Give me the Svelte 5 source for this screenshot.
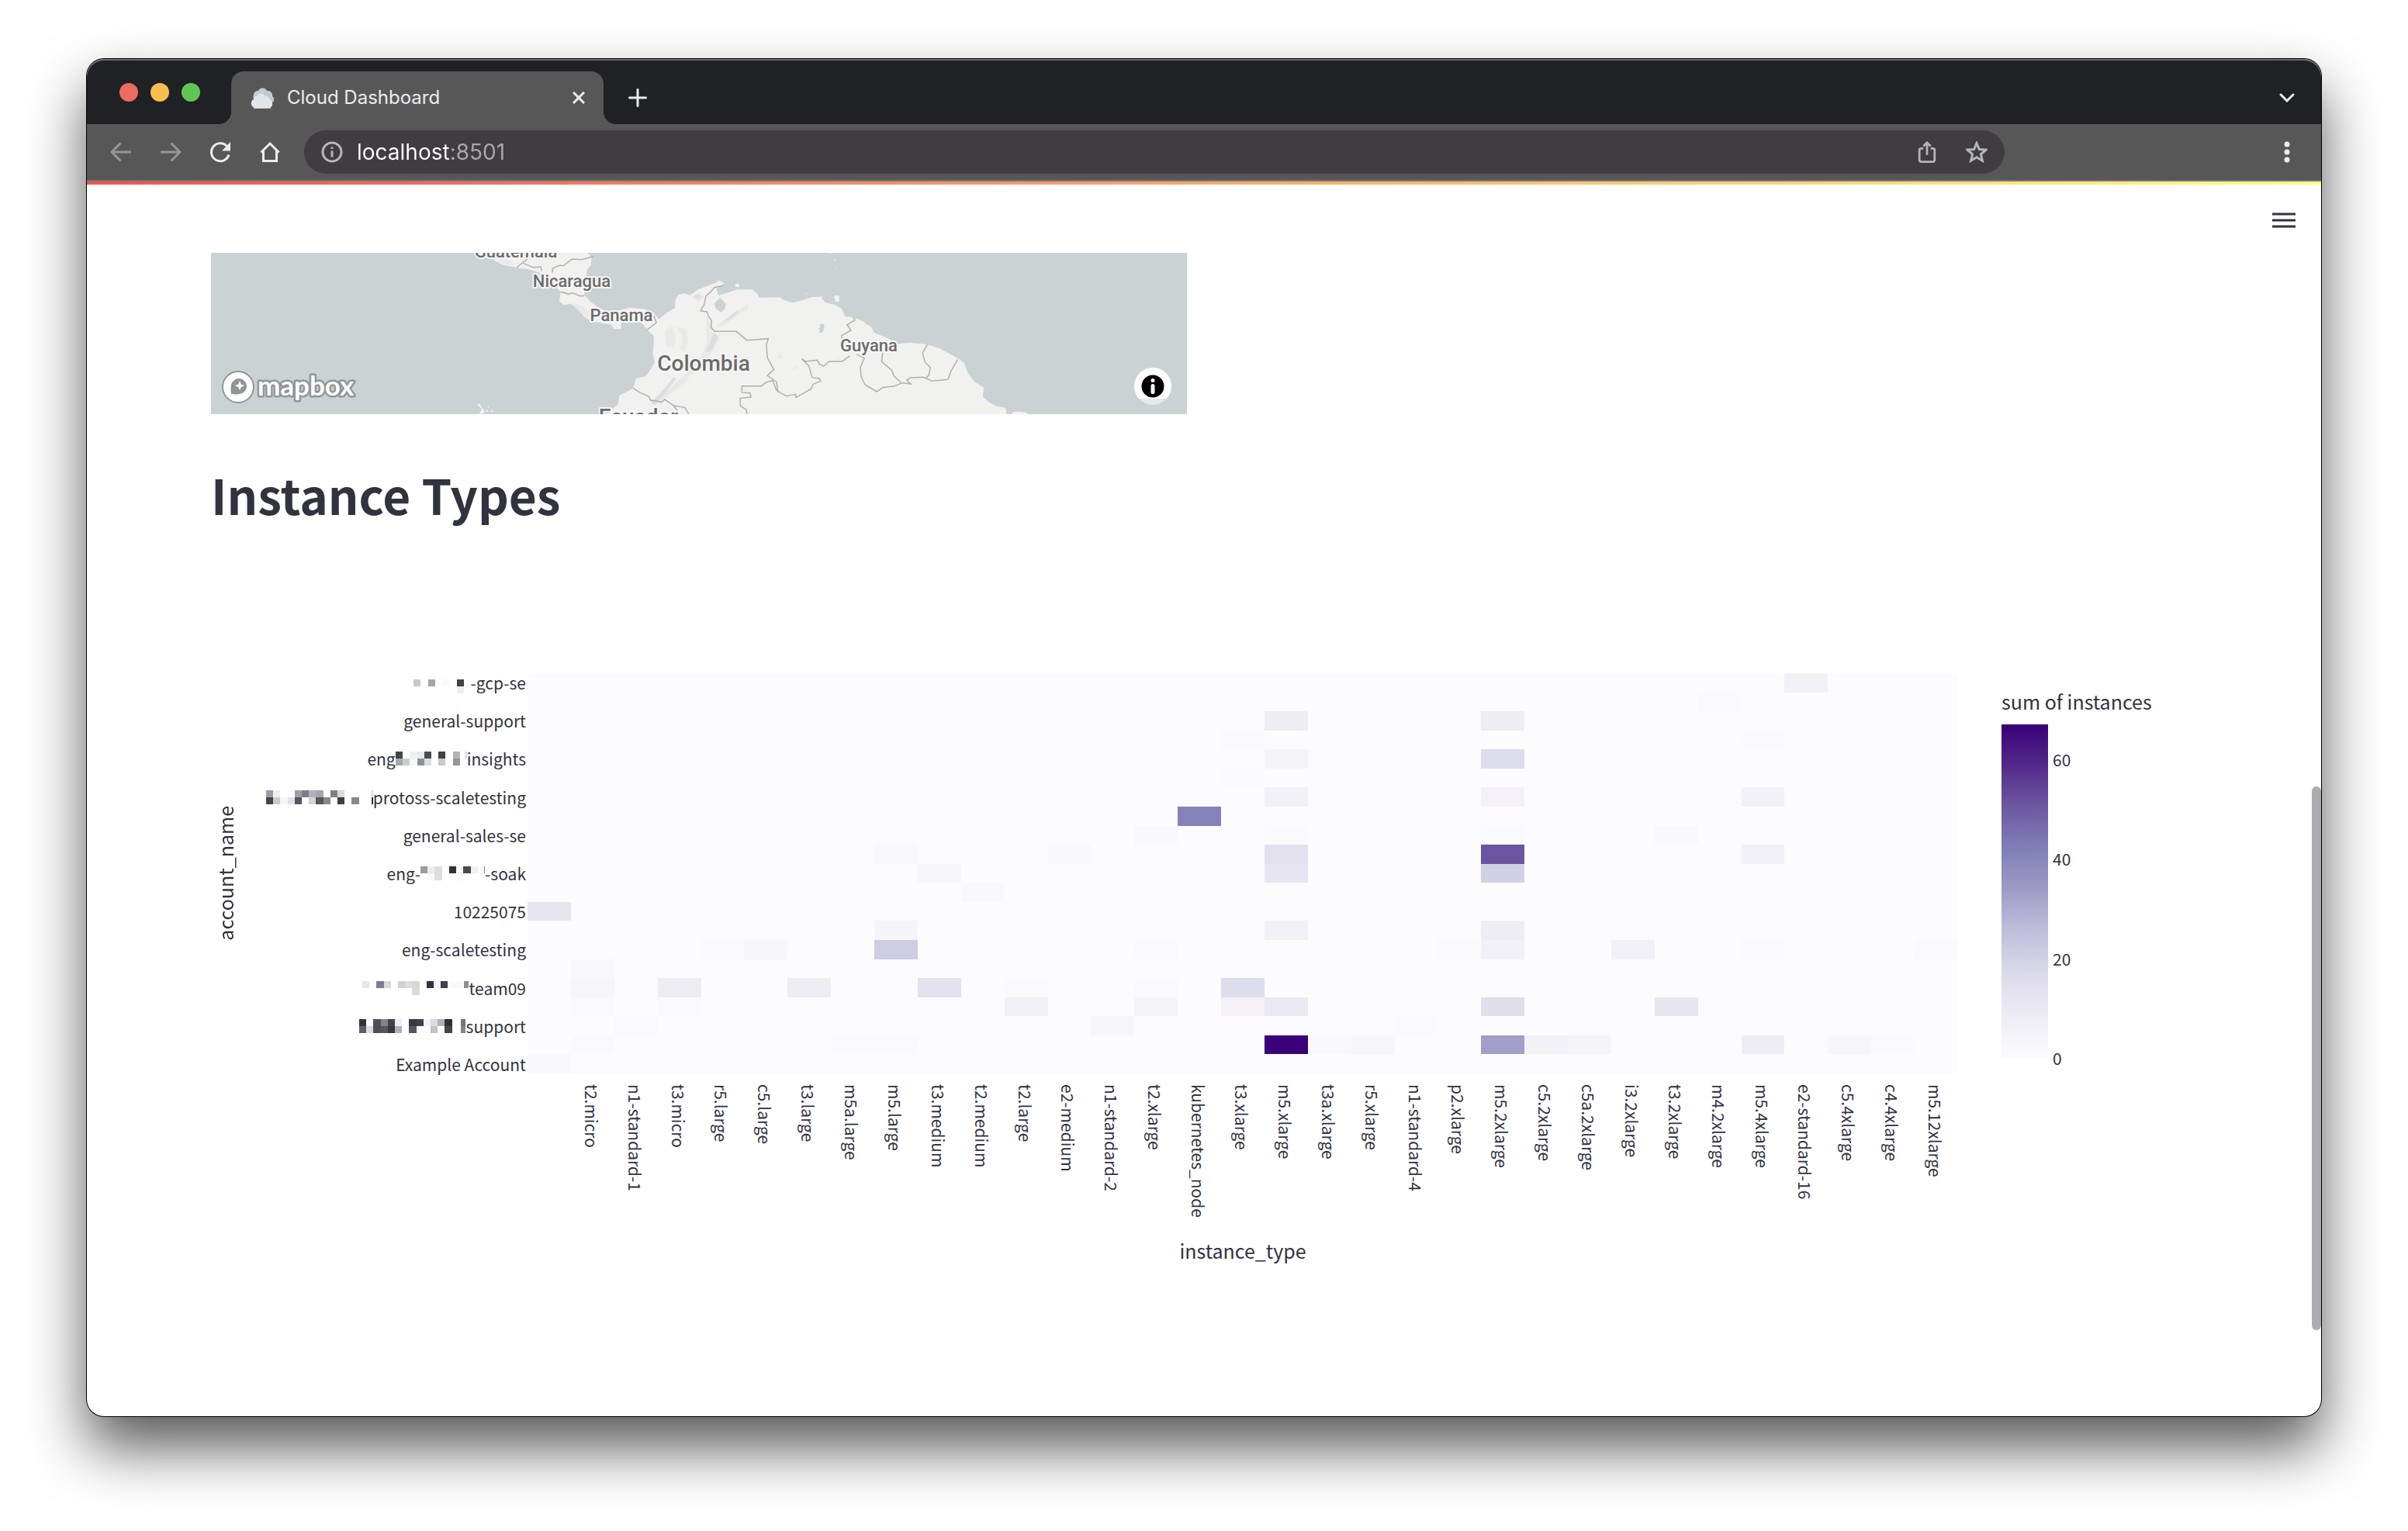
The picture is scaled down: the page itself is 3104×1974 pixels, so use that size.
<script>
  const instanceTypes = [
    '', 't2.micro', 'n1-standard-1', 't3.micro', 'r5.large', 'c5.large', 't3.large', 'm5a.large',
    'm5.large', 't3.medium', 't2.medium', 't2.large', 'e2-medium', 'n1-standard-2', 't2.xlarge',
    'kubernetes_node', 't3.xlarge', 'm5.xlarge', 't3a.xlarge', 'r5.xlarge', 'n1-standard-4',
    'p2.xlarge', 'm5.2xlarge', 'c5.2xlarge', 'c5a.2xlarge', 'i3.2xlarge', 't3.2xlarge',
    'm4.2xlarge', 'm5.4xlarge', 'e2-standard-16', 'c5.4xlarge', 'c4.4xlarge', 'm5.12xlarge'
  ];

  // Every second row carries a label; redacted parts are a mosaic of [column, row, colour, columns wide].
  const accounts = [
    { end: '-gcp-se', cols: 8, rows: 3, cells: [[0, 1, '#cac8ce'], [2, 1, '#a6a5ab'], [4, 1, '#f9f9f9'], [6, 1, '#42434e'], [6, 2, '#eeeeee']] },
    { end: 'general-support' },
    { start: 'eng', end: 'insights', cols: 10, rows: 2, cells: [[0, 0, '#42434e'], [2, 0, '#eef0f1'], [3, 0, '#e8e9ea'], [4, 0, '#4a4b56'], [6, 0, '#3f404b'], [8, 0, '#b4b4b8'], [0, 1, '#a7a6ac'], [1, 1, '#cacccd'], [2, 1, '#f6f7f7'], [3, 1, '#8f9096'], [4, 1, '#dbdcde'], [6, 1, '#c9cacb'], [8, 1, '#95969c'], [9.8, 0, '#d4d4d6', 0.2]] },
    { end: 'protoss-scaletesting', cols: 15, rows: 2, cells: [[0, 0, '#9b9ba1'], [1, 0, '#eef0f0'], [3, 0, '#fcfcfc'], [4, 0, '#a09fa6'], [5, 0, '#7b7e88'], [6, 0, '#b2b1b7'], [7, 0, '#a5a5ac'], [9, 0, '#807f88'], [10, 0, '#dbdbde'], [0, 1, '#42434e'], [1, 1, '#c9cacf'], [2, 1, '#f6f6f6'], [3, 1, '#e2e2e3'], [4, 1, '#555661'], [6, 1, '#d4d5d5'], [7, 1, '#555661'], [8, 1, '#88888f'], [10, 1, '#3c3d49'], [12, 1, '#88898f'], [14.8, 0, '#d9d9db', 0.2], [14.8, 1, '#31323e', 0.2]] },
    { end: 'general-sales-se' },
    { start: 'eng-', end: '-soak', cols: 9, rows: 2, cells: [[0, 0, '#9d9ca2'], [1, 0, '#ececec'], [2, 0, '#dddddf'], [4, 0, '#31323e'], [5, 0, '#fbfbfb'], [6, 0, '#484a53'], [7, 0, '#eff1f2'], [8, 0, '#fbfbfb'], [1, 1, '#f8f8f8'], [2, 1, '#dddfe0'], [5, 1, '#f9f9f9'], [8.9, 0, '#85868a', 0.1]] },
    { end: '10225075' },
    { end: 'eng-scaletesting' },
    { end: 'team09', cols: 15, rows: 2, cells: [[0, 0, '#e5e6e8'], [2, 0, '#7c7f89'], [3, 0, '#d7d8d8'], [5, 0, '#d2d2d3'], [6, 0, '#dcdcde'], [7, 0, '#d6d7d8'], [9, 0, '#31323e'], [10, 0, '#f5f5f7'], [11, 0, '#42424c'], [12, 0, '#f8f8f8'], [13, 0, '#f8f8f8'], [14.2, 0, '#8d8d92', 0.7], [7, 1, '#d9dadb']] },
    { end: 'support', cols: 15, rows: 2, cells: [[0, 0, '#31323e'], [2, 0, '#4d4e59'], [3, 0, '#828389'], [4, 0, '#40414c'], [5, 0, '#eeeeee'], [7, 0, '#373845'], [8, 0, '#40414c'], [9, 0, '#f4f6f6'], [10, 0, '#d9dbdd'], [11, 0, '#b1b1b5'], [12, 0, '#2d2e3b'], [14.2, 0, '#74747b', 0.7], [0, 1, '#5c5e68'], [1, 1, '#dcdce0'], [2, 1, '#4d4e59'], [3, 1, '#555661'], [4, 1, '#363743'], [5, 1, '#b2b1b7'], [7, 1, '#55565f'], [8, 1, '#fbfbfb'], [9, 1, '#fbfbfb'], [10, 1, '#c3c4c9'], [12, 1, '#44454f'], [14.2, 1, '#85868a', 0.7]] },
    { end: 'Example Account' }
  ];

  // One list per heatmap row: [column, instances]
  const counts = [
    [[29, 6]],
    [[27, 1]],
    [[17, 8], [22, 8]],
    [[16, 1], [28, 1]],
    [[17, 4], [22, 16]],
    [[16, 1]],
    [[17, 6], [22, 5], [28, 6]],
    [[15, 41]],
    [[14, 2], [17, 1], [22, 1], [26, 2]],
    [[8, 2], [12, 2], [17, 14], [22, 51], [28, 6]],
    [[9, 3], [17, 12], [22, 20]],
    [[10, 2]],
    [[0, 12]],
    [[8, 4], [17, 6], [22, 8]],
    [[4, 1], [5, 3], [8, 21], [14, 1], [21, 1], [22, 6], [25, 6], [28, 1], [32, 1]],
    [[1, 2]],
    [[1, 3], [3, 8], [6, 8], [9, 14], [11, 1], [14, 1], [16, 16]],
    [[1, 1], [3, 1], [11, 6], [14, 4], [16, 5], [17, 10], [22, 15], [26, 12]],
    [[2, 1], [13, 3], [20, 1]],
    [[1, 1], [7, 1], [8, 1], [17, 67], [18, 2], [19, 3], [22, 33], [23, 6], [24, 4], [28, 8], [30, 3], [31, 1]],
    [[0, 2]]
  ];

  const ramp = [[252, 252, 254], [238, 236, 244], [220, 219, 234], [192, 192, 221], [160, 156, 199], [130, 127, 183], [108, 90, 162], [83, 42, 139], [58, 0, 119]];
  const max = 67;
  function shade(n) {
    const t = (n / max) * (ramp.length - 1);
    const i = Math.min(Math.floor(t), ramp.length - 2);
    return `rgb(${ramp[i].map((c, k) => Math.round(c + (ramp[i + 1][k] - c) * (t - i))).join(' ')})`;
  }
  const cells = counts.flatMap((row, r) => row.map(([c, n]) => ({ r, c, n })));
  const ticks = [60, 40, 20, 0];
</script>

<div class="stage">
  <div class="window">
    <header class="tabs">
      <div class="lights"><button class="red" aria-label="Close window"></button><button class="amber" aria-label="Minimise window"></button><button class="green" aria-label="Zoom window"></button></div>
      <div class="tab">
        <svg class="favicon" viewBox="0 0 32 28" aria-hidden="true">
          <path fill="#c3cad3" d="M10 20a7 7 0 0 1-5-10 6 6 0 0 1 6-5 6 6 0 0 1 11 0 6 6 0 0 1 7 7 5 5 0 0 1-2 9z" />
          <path fill="#e1e6eb" d="M6 27a6 6 0 0 1-1-11 4 4 0 0 1 4-4 6 6 0 0 1 11 0 4 4 0 0 1 5 4 6 6 0 0 1 1 11z" />
          <path stroke="#c9d0d7" stroke-width="1" d="M5 27.500h22" />
        </svg>
        <span class="title">Cloud Dashboard</span>
        <button class="icon" aria-label="Close tab"><svg width="16" height="16" viewBox="0 0 16 16"><path d="M1 1l14 14M15 1L1 15" /></svg></button>
      </div>
      <button class="icon plus" aria-label="New tab"><svg width="24" height="24" viewBox="0 0 24 24"><path d="M12 1.500v21M1.500 12h21" /></svg></button>
      <button class="icon chevron" aria-label="Search tabs"><svg width="20" height="12" viewBox="0 0 20 12"><path d="M2 2l8 8 8-8" /></svg></button>
    </header>

    <nav class="toolbar" aria-label="Browser">
      <button class="icon dim" aria-label="Back"><svg viewBox="0 0 28 28"><path d="M27 14H2.500M13.500 2.500L2 14l11.500 11.500" /></svg></button>
      <button class="icon dim" aria-label="Forward"><svg viewBox="0 0 28 28"><path d="M1 14h24.500M14.500 2.500L26 14 14.500 25.500" /></svg></button>
      <button class="icon" aria-label="Reload"><svg viewBox="0 0 28 28"><path d="M25 17.500A11.500 11.500 0 1 1 22.500 6.500" /><path class="solid" d="M27 1v11.500H16z" /></svg></button>
      <button class="icon" aria-label="Home"><svg viewBox="0 0 28 28"><path d="M2.500 14.500L14 3l11.500 11.500M5.500 12.500V25.500h17V12.500" /></svg></button>
      <div class="address">
        <button class="icon grey" aria-label="Site information"><svg viewBox="0 0 28 28"><circle cx="14" cy="14" r="12" /><path d="M14 12.500V20.500M14 7.500V10" /></svg></button>
        <input type="text" aria-label="Address" value="localhost:8501" />
        <button class="icon light" aria-label="Share"><svg viewBox="0 0 28 30"><path d="M9 10H6a2.500 2.500 0 0 0-2.500 2.500v13.500A2.500 2.500 0 0 0 6 28.500h16a2.500 2.500 0 0 0 2.500-2.500V12.500A2.500 2.500 0 0 0 22 10h-3M14 19V2M9 7l5-5 5 5" /></svg></button>
        <button class="icon light" aria-label="Bookmark"><svg viewBox="0 0 28 28"><path d="M14 2.500l3.300 8 8.700.7-6.600 5.600 2 8.400L14 20.700 6.600 25.200l2-8.400L2 11.200l8.700-.7z" /></svg></button>
      </div>
      <button class="icon more" aria-label="Browser menu"><svg viewBox="0 0 28 28"><circle class="solid" cx="14" cy="4" r="3.500" /><circle class="solid" cx="14" cy="14" r="3.500" /><circle class="solid" cx="14" cy="24" r="3.500" /></svg></button>
    </nav>

    <div class="page">
      <div class="decoration"></div>
      <div class="menubar">
        <button class="icon" aria-label="App menu"><svg viewBox="0 0 30 22"><path d="M0 3h30M0 11h30M0 19h30" /></svg></button>
      </div>
      <main>
        <div class="columns">
          <div class="map">
            <svg viewBox="0 0 1258 208" role="img" aria-label="Map of instances">
              <svg width="1258" height="208" viewBox="29 48 2989 624" preserveAspectRatio="none">
                <g class="land">
                  <path d="M870 40L885 62 900 80 925 95 965 105 1000 112 1030 122 1050 135 1060 170 1085 180 1100 200 1095 235 1110 250 1130 245 1150 255 1165 280 1170 295 1190 310 1230 320 1255 325 1262 342 1285 342 1285 318 1340 315 1352 325 1365 345 1385 370 1385 400 1382 440 1388 470 1375 500 1360 525 1330 535 1322 572 1280 600 1275 635 1258 650 1240 680H2466L2463 648 2431 640 2411 625 2393 605 2396 570 2366 545 2346 510 2336 475 2321 460 2301 445 2261 418 2221 402 2171 395 2131 400 2096 375 2061 358 2051 335 2021 310 1996 297 1971 295 1961 265 1941 250 1911 240 1898 222 1905 216 1866 220 1841 232 1811 240 1786 232 1771 220 1709 222 1701 205 1686 190 1641 190 1606 205 1583 212 1576 185 1591 178 1601 165 1586 155 1571 165 1546 178 1521 190 1495 212 1480 205 1460 210 1450 235 1450 262 1430 275 1415 290 1400 305 1385 280 1355 265 1310 260 1280 270 1240 275 1210 255 1190 235 1172 210 1172 180 1180 135 1180 115 1192 95 1195 62 1172 40z" />
                  <path d="M2479 680l5-16 20-2 24 4 8 14zM1635 168h12v12h-12zM1939 213h14v24h-12v-12h-5zM1925 47h5v4h-5zM1937 72l6 5-2 2-5-4zM1942 102h4v3h-4zM1850 204h4v3h-4zM845 634l8-4 4 12 8 12 1 14-16 5 8-20zM871 655h6v8h-6zM876 641h5v5h-5zM886 657h6v6h-6z" />
                </g>
                <g class="relief">
                  <path d="M1420 350l20-20 12 40-4 45-24-5zM1452 332l30 10 10 40-12 50-12-10 6-50zM1545 290l25 60 15 30-20 50-45 60-40 60-60 60-30 30-12-20 60-50 50-60 40-60 20-50zM1500 215l25-12 15 16-20 20zM1578 330l45-45 50-38 2 16-45 38-40 36zM1120 235l50 20 35 40-20 10zM895 62l50 16 18 22-40-12zM1340 290l30-15 14 10-20 10z" />
                  <path class="deep" d="M1600 312l40-42 4 8-28 30zM1570 358l14 16-20 46-20 14zM1376 625l40-48 30-50 6 10-36 62-30 38zM1512 210l14-2 2 14-14 4z" />
                  <path d="M1762 458l10-28 6 28zM1805 505l16-18 8 6zM1935 462l20-8v10z" />
                </g>
                <path class="lake" d="M1588 222l18 23-3 20-12 13-15-13-6-20 8-10zM1893 325l12-3 3 18-7 16-9 1 2-10-5-6 6-6z" />
                <path class="borders" d="M1200 62L1165 74 1135 72 1108 98 1098 96 1075 108V125M965 105l20-21 13-12V48M985 88l30 16 24-2 3 16M1100 198l25 10 10-5 25 12 12-1M1385 290l8 28-28 27M1322 572l22 17 26 14 5 15 35 7 8-10 30 25 32 6 12 25M1440 632l18 26M1597 175l-26 7-14 20-12 13-6 35-11 22 20 4 4 16 10 18-2 25 12 17h66l32 34 66-6-6 24 3 50 20 45-20 24 28 24 5 42M1671 672l-3-18-18-14v-30l33-4-3-16-25-2v-25h60l12-13 22-8 12 38 30 22 28-7 2 12 45-32 8-20 22-10-4-12-22-3-10-45-22-27 12 10 36-5 6 15 14 8 16-18h40l24-22M1996 297l5 11-24 18 12 22-28 20v12M2006 440l24 16-12 34 2 36 12 32 36 27 18-16 36-6 24-12 26 4-12-14 10-10 42-2 26 15 48-6 10-34 20-44M2086 435l-3 34 30 32 8 24 24 27M2223 402l-15 34 8 34 16 22-4 28-10 14" />
              </svg>
              <g class="places" text-anchor="middle">
                <text x="393" y="6">Guatemala</text>
                <text x="465" y="44">Nicaragua</text>
                <text x="529" y="88">Panama</text>
                <text x="848" y="127">Guyana</text>
                <text class="big" x="635" y="152">Colombia</text>
                <text class="big" x="551" y="221">Ecuador</text>
              </g>
              <g class="brand">
                <circle cx="35" cy="173" r="20" />
                <path class="pin" d="M26 182c-1-9-.500-14 3-17 4-4 10-4 14 0s4 10 0 14c-3 3-8 4-17 3z" />
                <path class="star" d="M37 165l1.800 4.500 4.500 1.800-4.500 1.800L37 177.500l-1.800-4.400-4.500-1.800 4.500-1.800z" />
                <text x="60" y="184">mapbox</text>
              </g>
            </svg>
            <button class="info" aria-label="Toggle attribution"><svg width="30" height="30" viewBox="0 0 30 30"><circle cx="15" cy="15" r="14.500" /><circle class="w" cx="15" cy="7.500" r="2.500" /><path d="M12 12h5v12" /><rect class="w" x="12.500" y="12" width="5" height="13" rx="2.500" /></svg></button>
          </div>
        </div>

        <h1>Instance Types</h1>

        <figure class="chart">
          <div class="ytitle"><span>account_name</span></div>
          <ul class="accounts">
            {#each accounts as a}
              <li>
                {#if a.start}<span>{a.start}</span>{/if}
                {#if a.cells}
                  <svg class="mosaic" width={Math.round(a.cols * 9.2)} height={a.rows * 9} viewBox="0 0 {a.cols} {a.rows}" preserveAspectRatio="none" shape-rendering="crispEdges" aria-hidden="true">
                    {#each a.cells as [x, y, fill, w]}<rect {x} {y} width={w ?? 1} height="1" {fill} />{/each}
                  </svg>
                {/if}
                <span>{a.end}</span>
              </li>
            {/each}
          </ul>
          <div class="heatmap" role="img" aria-label="Sum of instances by account and instance type">
            {#each cells as { r, c, n }}
              <i style="grid-area: {r + 1} / {c + 1}; background: {shade(n)}"></i>
            {/each}
          </div>
          <aside class="legend">
            <p>sum of instances</p>
            <div class="scale">
              <div class="bar"></div>
              <div class="ticks">
                {#each ticks as t}<span>{t}</span>{/each}
              </div>
            </div>
          </aside>
          <ul class="types">
            {#each instanceTypes as t}<li>{t}</li>{/each}
          </ul>
          <figcaption>instance_type</figcaption>
        </figure>
      </main>
      <div class="thumb"></div>
    </div>
  </div>
</div>

<style>
  :global(body) {
    background: #fff;
  }
  .stage {
    box-sizing: border-box;
    min-height: 100vh;
    padding: 76px 112px 148px;
    display: flex;
    font-family: Inter, 'Liberation Sans', sans-serif;
    overflow: hidden;
  }
  .window {
    flex: 1;
    min-width: 0;
    display: flex;
    flex-direction: column;
    border-radius: 22px;
    background: #fff;
    overflow: hidden;
    box-shadow: 0 0 0 1px #000, 0 40px 76px rgba(0, 0, 0, 0.66);
  }
  button {
    border: 0;
    padding: 0;
    background: none;
  }
  .icon {
    flex: none;
    display: flex;
    align-items: center;
    justify-content: center;
    color: #ececec;
  }
  .icon svg {
    fill: none;
    stroke: currentColor;
    stroke-width: 3;
  }
  .icon .solid {
    fill: currentColor;
    stroke: none;
  }
  .tabs {
    box-sizing: border-box;
    height: 84px;
    padding: 16px 34px 0 42px;
    display: flex;
    border-radius: 22px 22px 0 0;
    background: #202124;
    box-shadow: inset 0 2px #6b6d6c;
  }
  .lights {
    display: flex;
    gap: 16px;
    padding-top: 15px;
    width: 144px;
  }
  .lights button {
    width: 24px;
    height: 24px;
    border-radius: 50%;
  }
  .red { background: #ed6a5e; }
  .amber { background: #f5bf4f; }
  .green { background: #61c555; }
  .tab {
    position: relative;
    box-sizing: border-box;
    width: 480px;
    height: 68px;
    padding: 0 24px;
    display: flex;
    align-items: center;
    gap: 16px;
    border-radius: 16px 16px 0 0;
    background: #575757;
    color: #ececec;
    font-size: 24px;
    line-height: 28px;
  }
  .tab::before,
  .tab::after {
    content: '';
    position: absolute;
    bottom: 0;
    width: 16px;
    height: 16px;
  }
  .tab::before {
    right: 100%;
    background: radial-gradient(circle at 0 0, transparent 16px, #575757 16px);
  }
  .tab::after {
    left: 100%;
    background: radial-gradient(circle at 100% 0, transparent 16px, #575757 16px);
  }
  .favicon {
    width: 32px;
    height: 28px;
  }
  .title { flex: 1; }
  .plus {
    width: 88px;
    height: 68px;
  }
  .plus svg,
  .chevron svg {
    stroke-linecap: round;
  }
  .chevron {
    margin-left: auto;
    width: 20px;
    height: 68px;
  }
  .toolbar {
    box-sizing: border-box;
    height: 74px;
    padding: 8px 30px 8px;
    display: flex;
    align-items: center;
    gap: 36px;
    background: #575757;
    border-bottom: 2px solid #77747a;
  }
  .toolbar svg {
    width: 28px;
    height: 28px;
  }
  .toolbar .dim {
    color: #969696;
  }
  .toolbar .grey,
  .toolbar .light {
    color: #b5b5b8;
  }
  .toolbar .light svg {
    stroke-width: 3;
  }
  .address {
    flex: 1;
    margin-left: -6px;
    margin-right: 314px;
    height: 56px;
    box-sizing: border-box;
    padding: 0 22px;
    display: flex;
    align-items: center;
    gap: 36px;
    border-radius: 28px;
    background: #403d40;
  }
  .address input {
    flex: 1;
    min-width: 0;
    margin-left: -18px;
    height: 40px;
    padding: 0;
    border: 0;
    font: 28px Inter, 'Liberation Sans', sans-serif;
    color: transparent;
    background: linear-gradient(90deg, #fff 120px, #a9a8aa 120px);
    -webkit-background-clip: text;
    background-clip: text;
  }
  .page {
    flex: 1;
    position: relative;
    font-family: 'Noto Sans CJK SC', 'Noto Sans', sans-serif;
    color: #31333f;
  }
  .decoration {
    height: 4px;
    background: linear-gradient(90deg, #f05452, #fffd80);
  }
  .menubar {
    box-sizing: border-box;
    height: 88px;
    padding: 4px 33px 0 0;
    display: flex;
    align-items: center;
    justify-content: flex-end;
  }
  .menubar .icon { color: #31333f; }
  .menubar svg {
    width: 30px;
    height: 22px;
    stroke-width: 3;
  }
  main {
    padding: 0 160px 120px;
  }
  .columns {
    display: grid;
    grid-template-columns: 1fr 1fr;
    gap: 44px;
  }
  .map {
    position: relative;
    background: #cad2d3;
    overflow: hidden;
  }
  .map > svg {
    display: block;
    width: 100%;
  }
  .land { fill: #f1f1ef; }
  .lake { fill: #cad2d3; }
  .relief {
    fill: #e8e8e8;
    opacity: 0.8;
  }
  .relief .deep { fill: #d9d9da; }
  .borders {
    fill: none;
    stroke: #b0b0b0;
    stroke-width: 1.500px;
    vector-effect: non-scaling-stroke;
  }
  .places {
    font: 500 22px Roboto, sans-serif;
    fill: #6b6b6b;
    stroke: #f6f6f5;
    stroke-width: 4px;
    stroke-linejoin: round;
    paint-order: stroke;
  }
  .places .big { font-size: 28px; }
  .brand circle,
  .brand text {
    fill: #fff;
    stroke: #8f9696;
  }
  .brand circle { stroke-width: 2px; }
  .brand .pin { fill: #8f9696; }
  .brand .star { fill: #fff; }
  .brand text {
    font: 700 35px Lato, sans-serif;
    stroke-width: 5px;
    stroke-linejoin: round;
    paint-order: stroke;
  }
  .info {
    position: absolute;
    right: 20px;
    bottom: 12px;
    width: 48px;
    height: 48px;
    display: flex;
    align-items: center;
    justify-content: center;
    border-radius: 24px;
    background: linear-gradient(#fff 40px, rgba(255, 255, 255, 0.5) 40px);
  }
  .info .w { fill: #fff; }
  h1 {
    margin: 58px 0 186px;
    font-size: 62px;
    line-height: 90px;
    font-weight: 700;
  }
  .chart {
    margin: 0;
    display: grid;
    grid-template-columns: 36px 372px 1fr 308px;
    font-size: 21px;
    line-height: 24px;
  }
  .chart ul {
    list-style: none;
    margin: 0;
    padding: 0;
  }
  .ytitle {
    display: flex;
    align-items: center;
    justify-content: center;
    font-size: 25px;
    line-height: 36px;
  }
  .ytitle span {
    writing-mode: vertical-rl;
    rotate: 180deg;
  }
  .accounts {
    display: flex;
    flex-direction: column;
    justify-content: space-between;
  }
  .accounts li {
    display: flex;
    align-items: center;
    justify-content: flex-end;
    height: 24px;
    padding-right: 2px;
  }
  .heatmap {
    height: 516px;
    display: grid;
    grid-template: repeat(21, 1fr) / repeat(33, 1fr);
    background: #fcfcfe;
  }
  .legend {
    padding: 18px 0 0 56px;
  }
  .legend p {
    margin: 0 0 12px;
    font-size: 25px;
    line-height: 36px;
    white-space: nowrap;
  }
  .scale {
    display: flex;
    gap: 6px;
  }
  .bar {
    width: 60px;
    height: 430px;
    background: linear-gradient(#3a0077, #532a8b, #6c5aa2, #827fb7, #a09cc7, #c0c0dd, #dcdbea, #eeecf4, #fcfcfe);
  }
  .ticks {
    display: flex;
    flex-direction: column;
    justify-content: space-between;
    padding-top: 33px;
    height: 409px;
  }
  .chart .types {
    grid-column: 3;
    padding-top: 14px;
    min-height: 196px;
    display: grid;
    grid-template-columns: repeat(33, 1fr);
  }
  .types li {
    justify-self: center;
    padding-right: 2px;
    writing-mode: vertical-rl;
    white-space: nowrap;
  }
  figcaption {
    grid-column: 3;
    text-align: center;
    font-size: 25px;
    line-height: 36px;
  }
  .thumb {
    position: absolute;
    right: 0;
    top: 49%;
    width: 12px;
    height: 44%;
    border-radius: 6px;
    background: #adacb1;
  }
</style>
